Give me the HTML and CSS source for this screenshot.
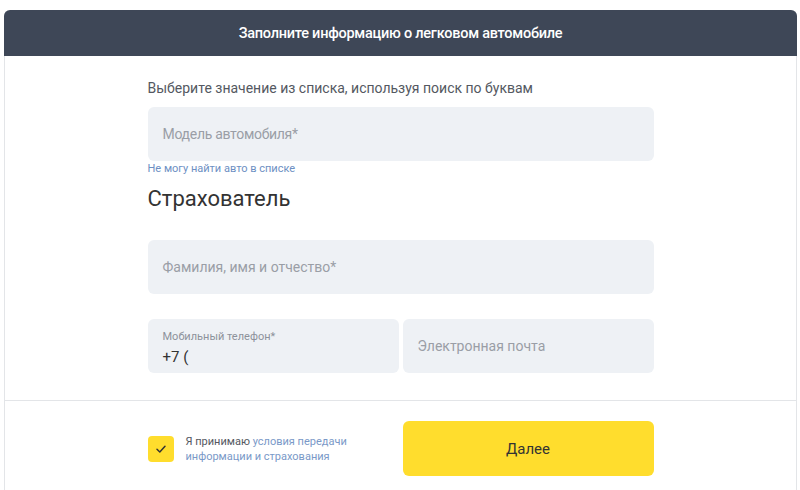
FILE: index.html
```html
<!DOCTYPE html>
<html lang="ru">
<head>
    <meta charset="UTF-8">
    <meta name="viewport" content="width=device-width, initial-scale=1.0">
    <title>Легковой автомобиль</title>
    <link rel="stylesheet" href="styles.css">
</head>
<body>
    <div class="form-card">
        <div class="form-header">Заполните информацию о легковом автомобиле</div>

        <div class="form-body">
            <div class="hint">Выберите значение из списка, используя поиск по буквам</div>
            <div class="field">
                <span class="placeholder placeholder-model">Модель автомобиля*</span>
            </div>
            <a class="small-link" href="#">Не могу найти авто в списке</a>

            <div class="section-title">Страхователь</div>

            <div class="field field-wide">
                <span class="placeholder">Фамилия, имя и отчество*</span>
            </div>

            <div class="field-row">
                <div class="field field-filled">
                    <span class="field-label">Мобильный телефон*</span>
                    <span class="field-value">+7 (</span>
                </div>
                <div class="field">
                    <span class="placeholder">Электронная почта</span>
                </div>
            </div>
        </div>

        <div class="form-footer">
            <div class="footer-inner">
                <div class="agree">
                    <div class="checkbox">
                        <svg width="14" height="14" viewBox="0 0 14 14">
                            <path d="M3 7.3 L5.8 10 L11 4.2" fill="none" stroke="#333" stroke-width="1.5" stroke-linecap="round" stroke-linejoin="round"/>
                        </svg>
                    </div>
                    <div class="agree-text">
                        <div>Я принимаю <a href="#">условия передачи</a></div>
                        <div><a href="#">информации и страхования</a></div>
                    </div>
                </div>
                <button class="next-btn">Далее</button>
            </div>
        </div>
    </div>
</body>
</html>
```

FILE: styles.css
```css
body {
    margin: 0;
    padding: 10px 3px 0 4px;
    font-family: Roboto, "Noto Sans", Arial, sans-serif;
    color: #333;
    background: white;
    height: 490px;
    box-sizing: border-box;
    overflow: hidden;
}

.form-card {
    border: 1px solid #e3e5e8;
    border-top: none;
    border-bottom: none;
    border-radius: 6px 6px 0 0;
    height: 480px;
    box-sizing: border-box;
    background: white;
}

.form-header {
    background: #3e4757;
    color: white;
    height: 46px;
    margin: 0 -1px;
    border-radius: 6px 6px 0 0;
    display: flex;
    justify-content: center;
    align-items: center;
    font-size: 14.5px;
    font-weight: 500;
    letter-spacing: -0.25px;
}

.form-body {
    width: 506px;
    margin: 0 auto;
    padding-top: 22px;
}

.hint {
    font-size: 14px;
    line-height: 20px;
    color: #545861;
}

.field {
    background: #eef1f5;
    border-radius: 6px;
    height: 54px;
    margin-top: 9px;
    padding: 0 15px;
    display: flex;
    flex-direction: column;
    justify-content: center;
    box-sizing: border-box;
}

.placeholder {
    font-size: 14px;
    color: #9a9ea6;
}

.placeholder-model {
    letter-spacing: -0.3px;
}

.small-link {
    display: block;
    font-size: 11px;
    line-height: 14px;
    color: #6d8fc3;
    text-decoration: none;
    margin-top: 1px;
}

.section-title {
    font-size: 22px;
    line-height: 28px;
    margin-top: 9px;
    color: #333;
}

.field-wide {
    margin-top: 27px;
}

.field-row {
    display: flex;
    gap: 4px;
    margin-top: 25px;
    margin-bottom: 27px;
}

.field-row .field {
    flex: 1;
    margin-top: 0;
}

.field-filled {
    justify-content: flex-start;
    padding-top: 12px;
}

.field-label {
    font-size: 11px;
    line-height: 12px;
    color: #8d929b;
}

.field-value {
    font-size: 15px;
    line-height: 20px;
    margin-top: 4px;
    color: #333;
}

.form-footer {
    border-top: 1px solid #e3e5e8;
    padding-top: 20px;
}

.footer-inner {
    width: 506px;
    margin: 0 auto;
    display: flex;
    justify-content: space-between;
    align-items: center;
}

.agree {
    display: flex;
    align-items: center;
    gap: 12px;
}

.checkbox {
    width: 26px;
    height: 26px;
    background: #ffdd2d;
    border-radius: 4px;
    display: flex;
    justify-content: center;
    align-items: center;
}

.agree-text {
    font-size: 11px;
    line-height: 15px;
    color: #545861;
}

.agree-text a {
    color: #7a99c8;
    text-decoration: none;
}

.next-btn {
    width: 251px;
    height: 55px;
    background: #ffdd2d;
    border: none;
    border-radius: 6px;
    font-family: Roboto, "Noto Sans", Arial, sans-serif;
    font-size: 15px;
    color: #333;
}
```
